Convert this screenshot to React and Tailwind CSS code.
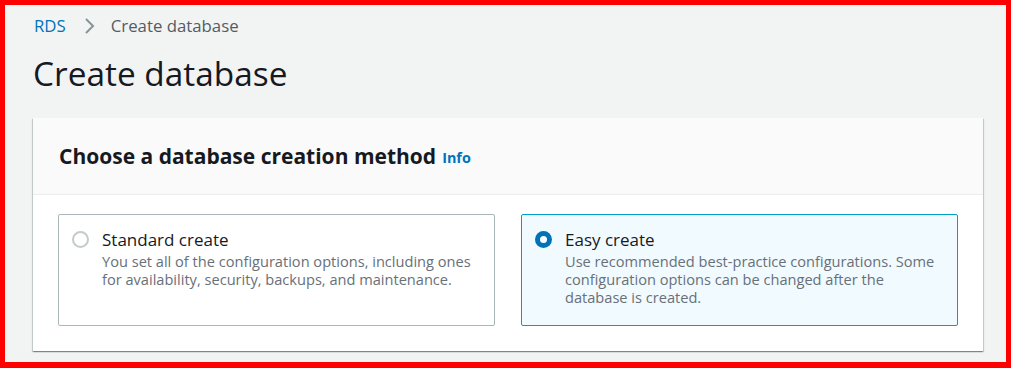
import React from "react";

const Radio = ({ checked }) =>
  checked ? (
    <span className="mt-[4px] flex h-[17px] w-[17px] shrink-0 items-center justify-center rounded-full bg-[#0073bb]">
      <span className="h-[7px] w-[7px] rounded-full bg-white" />
    </span>
  ) : (
    <span className="mt-[4px] h-[17px] w-[17px] shrink-0 rounded-full border-2 border-[#c5cbcc] bg-white" />
  );

const Tile = ({ checked, title, children }) => (
  <div
    className={`flex h-[112px] flex-1 gap-[13px] rounded-[2px] border px-[13px] pt-[12px] ${
      checked ? "border-[#00a1c9] bg-[#f1faff]" : "border-[#aab7b8] bg-white"
    }`}
  >
    <Radio checked={checked} />
    <div>
      <div className="text-[17px] leading-[25px] text-[#16191f]">{title}</div>
      <div className="text-[14.6px] leading-[18px] text-[#687078]">{children}</div>
    </div>
  </div>
);

export default function App() {
  return (
    <div
      className="h-[368px] w-[1011px] border-t-[5px] border-r-[5px] border-b-[6px] border-l-[5px] border-[#ff0000] bg-[#f2f3f3]"
      style={{ fontFamily: '"Open Sans", sans-serif' }}
    >
      <nav className="flex items-center pl-[29px] pt-[11px] text-[16.8px] leading-[20px]">
        <span className="text-[#0073bb]">RDS</span>
        <svg className="ml-[16px] mr-[15px]" width="14" height="18" viewBox="0 0 14 18">
          <path d="M4 2 L11 9 L4 16" fill="none" stroke="#879596" strokeWidth="2" />
        </svg>
        <span className="text-[#545b64]">Create database</span>
      </nav>
      <h1 className="pl-[28px] pt-[15px] text-[33.4px] leading-[44px] text-[#16191f]">Create database</h1>
      <div className="ml-[28px] mt-[23px] w-[950px] bg-white shadow-[0_1px_1px_0_rgba(0,28,36,0.3),1px_1px_1px_0_rgba(0,28,36,0.15),-1px_1px_1px_0_rgba(0,28,36,0.15)]">
        <div className="flex h-[77px] items-center border-b border-[#eaeded] bg-[#fafafa] pl-[26px]">
          <h2 className="text-[21px] font-bold leading-[24px] text-[#16191f]">Choose a database creation method</h2>
          <span className="ml-[6px] mt-[4px] text-[14.4px] font-bold text-[#0073bb]">Info</span>
        </div>
        <div className="flex gap-[26px] px-[25px] pt-[19px] pb-[25px]">
          <Tile title="Standard create">
            You set all of the configuration options, including ones for availability, security, backups, and maintenance.
          </Tile>
          <Tile checked title="Easy create">
            Use recommended best-practice configurations. Some configuration options can be changed after the database is created.
          </Tile>
        </div>
      </div>
    </div>
  );
}
